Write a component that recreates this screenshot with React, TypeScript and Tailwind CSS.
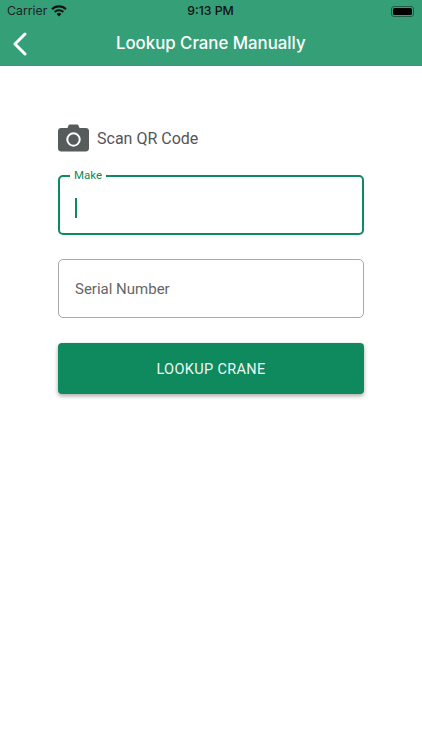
const font = "font-['Roboto',sans-serif]";

const WifiIcon = () => (
  <svg width="16" height="12" viewBox="0 0 16 12" fill="#111">
    <path d="M8 11.6 5.6 9a3.4 3.4 0 0 1 4.8 0L8 11.6Z" />
    <path d="M4.4 7.8 3 6.3a7.1 7.1 0 0 1 10 0l-1.4 1.5a5.1 5.1 0 0 0-7.2 0Z" />
    <path d="M1.8 5 .3 3.5a11 11 0 0 1 15.4 0L14.2 5a9 9 0 0 0-12.4 0Z" />
  </svg>
);

const CameraIcon = () => (
  <svg width="31" height="28" viewBox="0 0 31 28">
    <path
      d="M10.5 1.5c.2-.6.7-1 1.4-1h7.2c.7 0 1.2.4 1.4 1l1 2.5h6.5c1.6 0 3 1.3 3 3v17.5c0 1.6-1.4 3-3 3H3c-1.6 0-3-1.4-3-3V7c0-1.7 1.4-3 3-3h6.5l1-2.500Z"
      fill="#565b5b"
    />
    <circle cx="15.5" cy="15.5" r="6.2" fill="none" stroke="#fff" strokeWidth="2" />
  </svg>
);

export default function App() {
  return (
    <div className={`min-h-[750px] w-[422px] bg-white ${font}`}>
      <header className="h-[66px] bg-[#35a078]">
        <div className="flex h-[22px] items-center justify-between pl-[7px] pr-[8px] font-['Inter',sans-serif] text-[12.3px] text-[#111]">
          <div className="flex w-[140px] items-center gap-[4px]">
            <span className="text-[#222]">Carrier</span>
            <WifiIcon />
          </div>
          <span className="font-medium">9:13 PM</span>
          <div className="flex w-[140px] justify-end">
            <div className="flex h-[11px] w-[23px] items-center rounded-[3px] border border-[#1f5d47] p-[1px]">
              <div className="h-full w-full rounded-[1.5px] bg-black" />
            </div>
          </div>
        </div>
        <div className="flex h-[44px] items-center pl-[13px]">
          <svg width="14" height="24" viewBox="0 0 14 24" fill="none" stroke="#fff" strokeWidth="3" strokeLinecap="round" strokeLinejoin="round">
            <path d="M12 2 2 12l10 10" />
          </svg>
          <h1 className="ml-[89px] font-['Inter',sans-serif] text-[16.8px] font-medium text-white">Lookup Crane Manually</h1>
        </div>
      </header>

      <main className="px-[58px] pt-[58px]">
        <div className="flex h-7 items-center gap-2">
          <CameraIcon />
          <span className="pt-px text-[16px] text-[#555]">Scan QR Code</span>
        </div>

        <div className="relative mt-[23px] flex h-[60px] items-center rounded-[5px] border-2 border-[#0f8a5f] pl-[15px]">
          <span className="absolute -top-[9px] left-[10px] bg-white px-1 text-[11.5px] leading-[14px] text-[#0f8a5f]">Make</span>
          <div className="mt-[6px] h-[20px] w-[2px] bg-[#0f8a5f]" />
        </div>

        <div className="mt-[24px] flex h-[59px] items-center rounded-[5px] border border-[#a9a9a9] pl-4 pt-px text-[15px] text-[#666]">
          Serial Number
        </div>

        <button className="mt-[25px] flex h-[51px] w-full items-center justify-center rounded-[4px] bg-[#0f8a5f] pt-[3px] text-[14.5px] font-normal tracking-[0.35px] text-[#eef8f4] shadow-[0_2px_4px_rgba(0,0,0,0.35)]">
          LOOKUP CRANE
        </button>
      </main>
    </div>
  );
}
